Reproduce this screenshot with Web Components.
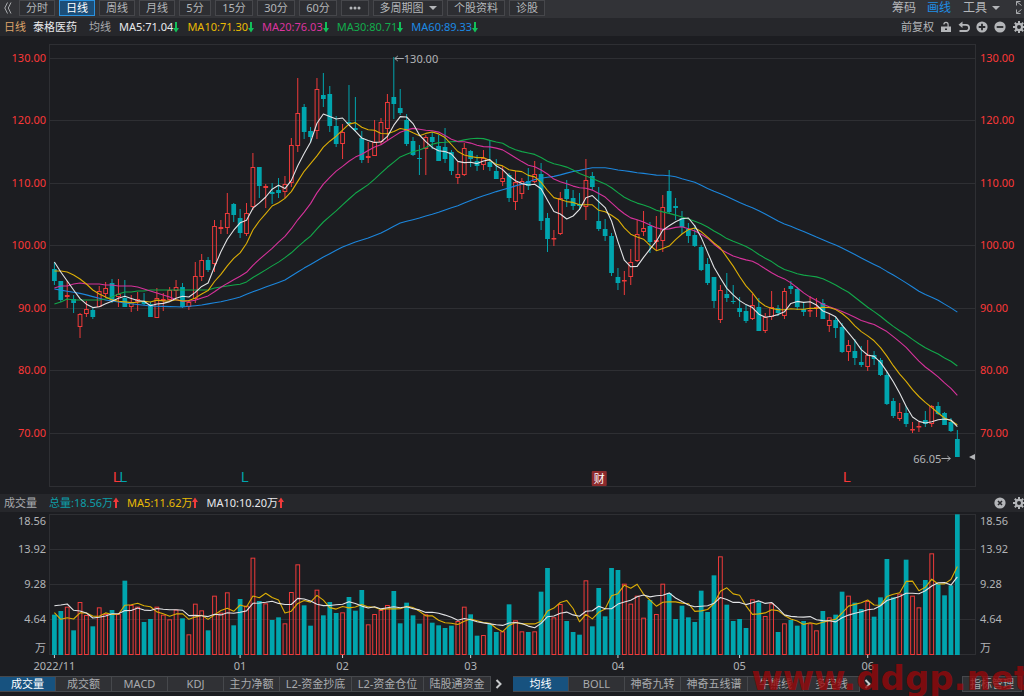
<!DOCTYPE html>
<html lang="zh-CN">
<head>
<meta charset="utf-8">
<meta name="viewport" content="width=device-width, initial-scale=1">
<title>泰格医药 日线</title>
<style>
html, body { margin: 0; background: #1c1d21; }
body { font: 11px/18px "Noto Sans", "Noto Sans CJK SC", sans-serif; color: #a9abae; }
</style>
</head>
<body>
<stock-app></stock-app>

<template id="t-app">
  <style>
    :host { display: flex; flex-direction: column; position: relative; min-height: 100vh; overflow: hidden; }
    .mark { position: absolute; right: -6px; bottom: -1px; font: bold 34px/38px "DejaVu Sans", sans-serif; color: rgba(152, 8, 10, .8); pointer-events: none; white-space: nowrap; }
    .yellow { color: #e9ba04; } .pink { color: #dc339f; } .green { color: #12ac4c; } .blue { color: #1c8ae4; }
    .white { color: #e8e9eb; } .sand { color: #dda46a; } .teal { color: #0d9ea8; }
    .name { margin: 0 12px 0 7px; }
    .first { margin-right: 8px; }
    .total { margin-right: 12px; }
  </style>
  <top-toolbar></top-toolbar>
  <info-bar>
    <span class="sand">日线</span><span class="white name">泰格医药</span><span class="first">均线</span>
    <ma-value class="white" dir-mark="down">MA5:71.04</ma-value>
    <ma-value class="yellow" dir-mark="down">MA10:71.30</ma-value>
    <ma-value class="pink" dir-mark="down">MA20:76.03</ma-value>
    <ma-value class="green" dir-mark="down">MA30:80.71</ma-value>
    <ma-value class="blue" dir-mark="down">MA60:89.33</ma-value>
    <icon-button slot="tools" label="前复权">前复权</icon-button>
    <icon-button slot="tools" icon="lock" label="锁定"></icon-button>
    <icon-button slot="tools" icon="undo" label="撤销"></icon-button>
    <icon-button slot="tools" icon="plus" label="放大"></icon-button>
    <icon-button slot="tools" icon="minus" label="缩小"></icon-button>
    <icon-button slot="tools" icon="gear" label="设置"></icon-button>
  </info-bar>
  <price-chart></price-chart>
  <info-bar>
    <span class="total">成交量</span>
    <ma-value class="teal" dir-mark="up">总量:18.56万</ma-value>
    <ma-value class="yellow" dir-mark="up">MA5:11.62万</ma-value>
    <ma-value class="white" dir-mark="up">MA10:10.20万</ma-value>
    <icon-button slot="tools" icon="close" label="关闭"></icon-button>
    <icon-button slot="tools" icon="gear" label="设置"></icon-button>
  </info-bar>
  <volume-chart></volume-chart>
  <indicator-bar></indicator-bar>
  <div class="mark">www.ddgp.net</div>
</template>

<template id="t-toolbar">
  <style>
    :host { display: flex; height: 18px; background: #323337; align-items: flex-start; }
    button { font: inherit; color: #b4b6b9; box-sizing: border-box; height: 16px; line-height: 14px; margin: 0; padding: 0; background: #2d2e32; border: 1px solid #46474b; width: 36px; white-space: nowrap; }
    .periods { display: flex; gap: 4px; }
    .collapse, .right button { border: 0; background: none; height: 16px; line-height: 16px; }
    .collapse { width: 19px; padding-left: 4px; text-align: left; }
    .collapse svg { display: block; }
    .on { background: #1c4e78; border-color: #2a93e0; color: #fff; }
    .w28 { width: 28px; } .w32 { width: 32px; } .w38 { width: 38px; } .w58 { width: 58px; } .w70 { width: 70px; }
    .right { margin-left: auto; display: flex; }
    .right button { font-size: 12px; width: auto; margin-right: 11px; }
    .right .draw { color: #1f8fe6; margin-right: 12px; }
    .right .menu { margin-right: 15px; }
    .right .full { margin: 0; width: 9px; }
    .caret { display: inline-block; border: 4px solid transparent; border-top-color: #b4b6b9; border-bottom: 0; margin-left: 5px; vertical-align: 2px; }
  </style>
  <button class="collapse" aria-label="收起"><svg width="8" height="16" viewBox="0 0 8 16" fill="none" stroke="#a9abae"><path d="M3.500 2.500L.8 8l2.700 5.500M7 2.500L4.300 8 7 13.500"/></svg></button>
  <div class="periods">
    <button>分时</button><button class="on">日线</button><button>周线</button><button>月线</button>
    <button class="w32">5分</button><button class="w38">15分</button><button class="w38">30分</button><button class="w38">60分</button>
    <button class="w28" aria-label="更多"><svg width="12" height="8" viewBox="0 0 12 8" fill="#b4b6b9"><circle cx="2" cy="4" r="1.500"/><circle cx="6" cy="4" r="1.500"/><circle cx="10" cy="4" r="1.500"/></svg></button>
    <button class="w70">多周期图<span class="caret"></span></button><button class="w58">个股资料</button><button>诊股</button>
  </div>
  <div class="right">
    <button>筹码</button><button class="draw">画线</button><button class="menu">工具<span class="caret"></span></button>
    <button class="full" aria-label="全屏"><svg width="9" height="16" viewBox="0 0 9 16" fill="none" stroke="#a9abae"><path d="M1.500 5.500v-4h4M1.500 1.500l5 4M1.500 9.500v4h4M1.500 13.500l5-4"/></svg></button>
  </div>
</template>

<template id="t-info">
  <style>
    :host { display: flex; height: 18px; background: #26272b; padding-left: 4px; white-space: nowrap; }
    .left { display: flex; }
    .tools { display: flex; margin-left: auto; gap: 6px; align-items: center; }
  </style>
  <div class="left"><slot></slot></div>
  <div class="tools"><slot name="tools"></slot></div>
</template>

<template id="t-ma">
  <style>
    :host { display: flex; align-items: center; margin-right: 8px; }
    svg { display: block; }
  </style>
  <slot></slot><svg width="6" height="12" viewBox="0 0 6 12"><path/></svg>
</template>

<template id="t-icon">
  <style>
    :host { display: block; color: #b4b6b9; }
    button { display: block; font: inherit; color: inherit; border: 0; background: none; padding: 0; margin: 0; line-height: 18px; }
    svg { display: block; }
  </style>
  <button><slot></slot></button>
</template>

<template id="t-bar">
  <style>
    :host { display: flex; height: 16px; margin-bottom: 4px; }
    .group { display: flex; border-top: 1px solid #46484c; }
    button { font: inherit; color: #a9abae; box-sizing: border-box; height: 15px; line-height: 14px; padding: 0; margin: 0; width: 56px; border: 0; border-right: 1px solid #46484c; border-bottom: 1px solid #46484c; background: #303135; white-space: nowrap; }
    .w67 { width: 67px; } .w72 { width: 72px; }
    .on { background: #17527f; color: #fff; }
    .more { width: 16px; border: 0; background: none; height: 16px; }
    .more svg { display: block; margin: 0 auto; }
    .main { margin-left: 6px; }
    .manage { margin-left: auto; margin-right: 2px; width: 60px; height: 16px; border: 1px solid #46484c; }
  </style>
  <div class="group"><button class="on">成交量</button><button>成交额</button><button>MACD</button><button>KDJ</button><button>主力净额</button><button class="w72">L2-资金抄底</button><button class="w72">L2-资金仓位</button><button class="w67">陆股通资金</button></div>
  <button class="more" aria-label="更多副图指标"><svg width="8" height="12" viewBox="0 0 8 12" fill="none" stroke="#c8cacc" stroke-width="2"><path d="M1.500 2l4 4-4 4"/></svg></button>
  <div class="group main"><button class="on">均线</button><button>BOLL</button><button>神奇九转</button><button class="w67">神奇五线谱</button><button>牛熊线</button><button>多空线</button></div>
  <button class="more" aria-label="更多主图指标"><svg width="8" height="12" viewBox="0 0 8 12" fill="none" stroke="#c8cacc" stroke-width="2"><path d="M1.500 2l4 4-4 4"/></svg></button>
  <button class="manage">指标管理</button>
</template>

<template id="t-chart">
  <style>
    :host { display: block; }
    svg { display: block; width: 100%; font-family: "Noto Sans", "Noto Sans CJK SC", sans-serif; font-size: 11px; }
    .grid { stroke: #2e2f33; fill: none; }
    .up { stroke: #ee3a3a; fill: none; }
    .down { fill: #00a5ae; stroke: none; }
    .dw { stroke: #00a5ae; fill: none; }
    .line { fill: none; stroke-width: 1.1; stroke-linejoin: round; }
    .red { fill: #fa3838; } .grey { fill: #b2b4b7; } .teal { fill: #00a5ae; }
    .flag { font: 14px "Liberation Sans", sans-serif; }
    .tick { stroke: #d0d0d0; }
  </style>
  <svg></svg>
</template>

<script>
/* Daily candles: high, body top, body bottom, low (chart units, 6.25 per yuan, 58 = 130.00), r = rising, f = falling. */
const CANDLES = `262 269 281 285 f|281 281 300 302 f|281 295 297 308 r|295 299 303 313 f|313 314 327 338 r|301 309 314 317 r|308 310 317 319 f|286 291 307 307 r|282 288 294 298 r|279 283 301 303 f
279 294 297 307 r|280 298 307 307 f|295 302 307 312 r|292 299 302 311 r|293 301 304 305 f|302 304 317 317 f|288 298 318 318 r|293 299 301 311 r|287 290 300 301 r|280 287 291 298 r
283 287 307 308 f|300 302 307 310 r|262 276 299 303 r|254 260 277 281 r|257 260 270 272 f|220 226 264 272 r|220 227 229 234 r|193 213 228 234 r|203 204 215 222 f|209 218 233 238 f
203 213 234 236 r|153 167 207 210 r|167 167 186 198 f|184 186 188 208 r|183 192 194 204 f|178 190 193 198 f|176 184 192 198 r|138 145 183 187 r|78 113 146 152 r|104 107 132 139 f
127 131 137 143 f|78 89 131 139 r|73 95 99 107 f|86 94 126 132 f|116 126 144 147 f|124 132 144 159 r|85 122 124 125 f|97 128 130 132 f|131 138 160 163 f|142 156 158 163 r
120 142 156 156 r|118 122 142 145 r|94 102 129 140 r|57 97 104 119 f|89 108 113 115 f|114 120 144 146 f|137 141 155 156 f|145 158 159 175 f|135 137 149 175 r|132 137 142 149 f
135 146 161 161 f|128 147 159 163 f|150 152 171 175 f|162 174 178 184 r|143 148 175 176 r|150 151 159 167 f|155 161 166 171 f|150 158 165 170 r|140 162 167 171 f|159 171 179 179 f
166 178 182 186 r|173 175 198 202 f|171 182 202 210 r|178 181 194 199 r|168 181 186 190 f|161 174 182 183 r|163 174 221 230 f|213 218 239 252 f|230 238 239 246 r|192 198 234 235 r
180 189 199 207 f|190 198 206 210 f|193 204 206 209 f|159 180 207 220 r|172 176 187 190 f|187 221 229 231 f|219 229 236 241 f|233 236 273 276 f|268 277 283 290 f|271 280 281 295 r
249 262 277 285 r|220 234 261 262 r|211 228 232 236 r|222 226 242 253 f|216 240 242 250 r|195 207 241 252 r|170 191 212 213 f|198 206 208 220 f|211 218 227 234 f|223 229 236 243 f
225 235 246 247 f|245 247 270 271 f|258 264 283 285 f|277 277 301 308 f|285 290 320 323 r|273 294 298 302 f|285 301 302 304 f|297 308 312 317 f|305 311 321 323 f|294 305 319 320 r
298 307 331 331 f|313 317 331 333 r|291 307 317 320 r|305 308 313 316 f|288 291 316 319 r|281 286 289 294 f|287 289 307 310 f|302 309 312 316 f|296 310 311 317 r|298 307 308 317 r
299 303 319 319 f|313 320 326 332 r|317 320 328 338 f|323 327 352 353 f|340 345 352 361 r|339 351 358 365 f|346 362 365 367 f|340 355 367 371 r|351 355 359 365 f|358 360 375 376 f
372 375 404 405 f|398 401 416 418 f|403 412 419 421 r|406 413 424 427 f|422 429 430 433 r|422 426 427 432 r|411 420 424 427 f|405 406 424 427 r|402 406 414 415 f|412 413 425 425 f
418 422 431 432 f|430 439 457 457 f`.split(/[|\n]/).map(s => { const p = s.split(' '); return { h: +p[0], t: +p[1], b: +p[2], l: +p[3], rise: p[4] === 'r' }; });

/* Top of each volume bar, in thirds of a unit above a base line at 570. */
const VOLUMES = [449,438,425,496,411,450,484,427,447,435,447,347,420,425,471,462,425,449,463,434,460,508,416,436,496,392,443,382,481,402,
422,278,408,415,465,457,475,381,298,421,482,374,451,411,444,442,396,437,375,478,447,435,420,378,475,413,451,476,448,473,
481,489,482,468,425,448,512,510,478,501,499,418,466,499,501,499,380,309,457,417,468,501,509,346,484,369,454,309,315,356,
416,392,458,405,447,356,384,462,422,457,471,377,441,331,274,419,468,462,489,403,412,453,415,501,475,465,482,468,475,496,
438,457,449,380,392,413,432,408,455,397,282,397,386,284,392,427,345,265,356,391,361,148];

/* Averages before enough sessions are loaded to compute them. */
const SEED5 = [262,272,281,290];
const SEED10 = [271,271,272,275,279,284,290,294,297];
const SEED20 = [288,286,286,284,283,284,284,284,285,285,286,286,286,287,289,291,293,295,297];
const SEED30 = [304,302,299,300,300,300,300,300,299,297,294,292,292,291,291,290,290,290,290,290,290,290,290,290,290,288,287,286,285];
const POINTS60 = [[0,289],[4.5,294],[8,300],[11,303],[15,306],[20,307],[23,305],[26.6,301],[29,297],[30.5,293],[36,280],[38.5,270],[42,257],[45,247],[47,242],[49,238],[51,233],[54,223],[57,218],[59,214]];
const SEED60 = Array.from({ length: 59 }, (_, i) => {
  const k = POINTS60.findIndex(p => p[0] > i), [x0, y0] = POINTS60[k - 1], [x1, y1] = POINTS60[k];
  return y0 + (y1 - y0) * (i - x0) / (x1 - x0);
});

function average(values, n, seed) {
  return values.map((_, i) => i < n - 1 ? seed[i] : values.slice(i - n + 1, i + 1).reduce((a, b) => a + b, 0) / n);
}

class Base extends HTMLElement {
  constructor(id) {
    super();
    this.attachShadow({ mode: 'open' }).append(document.getElementById(id).content.cloneNode(true));
  }
}

class MaValue extends Base {
  constructor() { super('t-ma'); }
  connectedCallback() {
    const up = this.getAttribute('dir-mark') === 'up';
    const p = this.shadowRoot.querySelector('path');
    p.setAttribute('d', up ? 'M3 0.5L6 5H4v6H2V5H0z' : 'M3 11.500L6 7H4V1H2v6H0z');
    p.setAttribute('fill', up ? '#f03a3a' : '#12c05a');
  }
}

const ICONS = {
  lock: '<path fill="currentColor" fill-rule="evenodd" d="M1 5.500h6.500V3.500a1.500 1.500 0 0 0-3 0H3.300a2.700 2.700 0 0 1 5.400 0v2H11V11H1zM5 7.500V9h2V7.500z"/>',
  undo: '<path fill="none" stroke="currentColor" stroke-width="1.800" d="M1.500 10H8a3 3 0 0 0 0-6.200H3"/><path fill="currentColor" d="M0.500 3.800L4.500 .5v6.600z"/>',
  plus: '<circle cx="6" cy="6" r="5.600" fill="currentColor"/><path stroke="#26272b" stroke-width="1.800" d="M6 2.700v6.600M2.700 6h6.600"/>',
  minus: '<circle cx="6" cy="6" r="5.600" fill="currentColor"/><path stroke="#26272b" stroke-width="1.800" d="M2.700 6h6.600"/>',
  close: '<circle cx="6" cy="6" r="5.600" fill="currentColor"/><path stroke="#26272b" stroke-width="1.600" d="M4 4l4 4M8 4L4 8"/>',
  gear: '<g transform="translate(1 0)"><circle cx="6" cy="6" r="3.100" fill="none" stroke="currentColor" stroke-width="2.200"/><path stroke="currentColor" stroke-width="2" d="M6 0v2.500M6 9.500V12M0 6h2.500M9.500 6H12M1.800 1.800l1.700 1.700M8.500 8.500l1.700 1.700M1.800 10.200l1.700-1.700M8.500 3.500l1.700-1.700"/></g>'
};
class IconButton extends Base {
  constructor() { super('t-icon'); }
  connectedCallback() {
    const b = this.shadowRoot.querySelector('button'), name = this.getAttribute('icon');
    b.setAttribute('aria-label', this.getAttribute('label'));
    if (name) b.innerHTML = `<svg width="12" height="12" viewBox="0 0 12 12">${ICONS[name]}</svg>`;
  }
}

class Chart extends Base {
  constructor() { super('t-chart'); }
  connectedCallback() {
    this.draw();
    new ResizeObserver(() => this.draw()).observe(this);
  }
  draw() {
    const width = this.clientWidth || innerWidth, svg = this.shadowRoot.querySelector('svg');
    if (width === this.drawn) return;
    this.drawn = width;
    this.left = 49;
    this.right = width - 49;
    this.step = (this.right - this.left) / 144.6;
    svg.setAttribute('height', this.tall);
    svg.innerHTML = this.content();
  }
  x(i) { return +(this.left + 5.4 + i * this.step).toFixed(2); }
  line(values, color) {
    return `<polyline class="line" stroke="${color}" points="${values.map((v, i) => this.x(i) + ',' + v.toFixed(1)).join(' ')}"/>`;
  }
  labels(y, text, cls) {
    return `<text class="${cls}" x="46" y="${y}" text-anchor="end">${text}</text><text class="${cls}" x="${this.right + 5}" y="${y}">${text}</text>`;
  }
}

class PriceChart extends Chart {
  get tall() { return 458; }
  content() {
    const off = 36, L = this.left, R = this.right, bw = this.step * 0.74;
    let s = `<rect class="grid" x="${L + .5}" y="8.500" width="${R - L}" height="442"/>`;
    [58, 120, 183, 245, 308, 370, 433].forEach((y, k) => {
      s += `<path class="grid" d="M${L} ${y - off + .5}H${R}"/>` + this.labels(y - off + 4, (130 - 10 * k) + '.00', 'red');
    });
    CANDLES.forEach((c, i) => {
      const x = this.x(i), h = c.h - off, t = c.t - off, b = c.b - off, l = c.l - off;
      if (c.rise) s += `<path class="up" d="M${x} ${h}V${t}M${x} ${b}V${l}"/><rect class="up" x="${x - bw / 2 + .5}" y="${t + .5}" width="${bw - 1}" height="${Math.max(b - t - 1, .5)}"/>`;
      else s += `<path class="dw" d="M${x} ${h}V${l}"/><rect class="down" x="${x - bw / 2}" y="${t}" width="${bw}" height="${Math.max(b - t, 1)}"/>`;
    });
    const close = CANDLES.map(c => c.rise ? c.t : c.b);
    [[60, SEED60, '#1c86dc'], [30, SEED30, '#12a84a'], [20, SEED20, '#d6329b'], [10, SEED10, '#dcae06'], [5, SEED5, '#e2e3e5']].forEach(([n, seed, color]) => {
      s += this.line(average(close, n, seed).map(v => v - off), color);
    });
    const hi = this.x(53), lo = this.x(141), y = 423;
    s += `<path stroke="#a9abae" fill="none" d="M${hi + 1} 22.500h9M${hi + 4} 20l-3 2.500 3 2.500"/><text class="grey" x="${hi + 10}" y="27">130.00</text>`;
    s += `<text class="grey" x="${lo - 16}" y="427" text-anchor="end">66.05</text><path stroke="#a9abae" fill="none" d="M${lo - 16} ${y - .5}h9M${lo - 10} ${y - 3}l3 2.500-3 2.500"/>`;
    s += `<path class="grey" d="M${R - 6} 421l6-3v6z"/>`;
    s += `<text class="flag red" x="${this.x(9) + 1}" y="446">L</text><text class="flag teal" x="${this.x(10) + 1}" y="446">L</text><text class="flag teal" x="${this.x(29) + 1}" y="446">L</text><text class="flag red" x="${this.x(123) + 1}" y="446">L</text>`;
    const n = this.x(85);
    s += `<rect x="${n - 7}" y="435" width="15" height="15" rx="1" fill="#8c2a2c"/><text x="${n + .5}" y="447" text-anchor="middle" fill="#fff">财</text>`;
    return s;
  }
}

class VolumeChart extends Chart {
  get tall() { return 164; }
  content() {
    const L = this.left, R = this.right, bw = this.step * 0.74, base = 143, top = v => (v - 141) / 3;
    let s = `<rect class="grid" x="${L + .5}" y="2.500" width="${R - L}" height="140"/>`;
    [37, 72, 107].forEach(y => { s += `<path class="grid" d="M${L} ${y + .5}H${R}"/>`; });
    [[13, '18.56'], [41, '13.92'], [76, '9.28'], [111, '4.64'], [140, '万']].forEach(([y, t]) => { s += this.labels(y, t, 'grey'); });
    VOLUMES.forEach((v, i) => {
      const x = this.x(i), y = +top(v).toFixed(2);
      if (CANDLES[i].rise) s += `<rect class="up" x="${x - bw / 2 + .5}" y="${y + .5}" width="${bw - 1}" height="${base - y - 1}"/>`;
      else s += `<rect class="down" x="${x - bw / 2}" y="${y}" width="${bw}" height="${base - y}"/>`;
    });
    s += this.line(average(VOLUMES, 5, [443, 463, 458, 462]).map(top), '#dcae06');
    s += this.line(average(VOLUMES, 10, [422, 420, 417, 436, 438, 444, 459, 457, 453]).map(top), '#e2e3e5');
    [[0, '2022/11'], [29, '01'], [45, '02'], [65, '03'], [88, '04'], [107, '05'], [127, '06']].forEach(([i, t]) => {
      s += `<path class="tick" d="M${this.x(i)} 143v3"/><text class="grey" x="${this.x(i)}" y="158" text-anchor="middle">${t}</text>`;
    });
    return s;
  }
}

customElements.define('ma-value', MaValue);
customElements.define('icon-button', IconButton);
customElements.define('top-toolbar', class extends Base { constructor() { super('t-toolbar'); } });
customElements.define('info-bar', class extends Base { constructor() { super('t-info'); } });
customElements.define('indicator-bar', class extends Base { constructor() { super('t-bar'); } });
customElements.define('price-chart', PriceChart);
customElements.define('volume-chart', VolumeChart);
customElements.define('stock-app', class extends Base { constructor() { super('t-app'); } });
</script>
</body>
</html>
